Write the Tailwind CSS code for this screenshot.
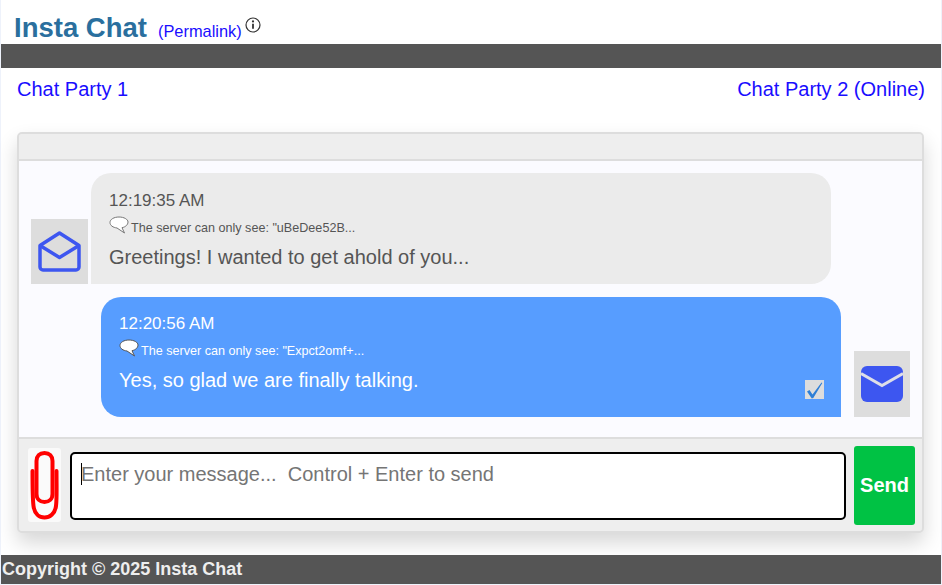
<!DOCTYPE html>
<html lang="en">
<head>
    <meta charset="UTF-8">
    <title>Insta Chat</title>
    <script src="https://cdn.jsdelivr.net/npm/@tailwindcss/browser@4"></script>
</head>
<body class="bg-[#eef2fb] font-['Liberation_Sans',Arial,sans-serif] overflow-hidden">
<div class="ml-px mr-px h-[584px] bg-white flex flex-col">
    <header class="h-[44px] flex items-start pl-[13px] pt-[12px]">
        <h1 class="text-[27.5px] leading-[32px] font-bold text-[#2a6f9e]">Insta Chat</h1>
        <a class="ml-[11px] mt-[9px] text-[16.4px] leading-[20px] text-[#1a0dff]">(Permalink)</a>
        <svg class="ml-[3px] mt-[5px]" width="16" height="16" viewBox="0 0 16 16" fill="none">
            <circle cx="8" cy="8" r="7" stroke="#333" stroke-width="1.2"/>
            <path d="M8 6.800v5" stroke="#333" stroke-width="1.800"/>
            <circle cx="8" cy="4.400" r="1.100" fill="#333"/>
        </svg>
    </header>
    <div class="h-[24px] bg-[#555]"></div>
    <div class="h-[64px] flex justify-between pl-[16px] pr-[16px] pt-[9px] text-[20px] leading-[24px] text-[#1a0dff]">
        <a>Chat Party 1</a>
        <a>Chat Party 2 (Online)</a>
    </div>
    <section class="ml-[16px] mr-[17px] h-[401px] flex flex-col border-2 border-[#ddd] rounded-[5px] shadow-[0_10px_20px_rgba(0,0,0,0.16)] bg-[#eee]">
        <div class="h-[27px] bg-[#eee] border-b-2 border-[#ddd] rounded-t-[4px]"></div>
        <div class="h-[278px] bg-[#fbfbff] flex flex-col gap-[13px] pt-[12px] border-b-2 border-[#ddd]">
            <div class="flex items-end pl-[12px]">
                <div class="w-[57px] h-[65px] bg-[#ddd] flex items-center justify-center">
                    <svg width="43" height="41" viewBox="0 0 43 41" fill="none" stroke="#3d56f0" stroke-width="3.500" stroke-linejoin="round">
                        <path d="M2 14.500 21.500 2 41 14.500V36a3 3 0 0 1-3 3H5a3 3 0 0 1-3-3z"/>
                        <path d="M2 14.500 21.500 26.500 41 14.500"/>
                    </svg>
                </div>
                <div class="ml-[3px] w-[740px] h-[111px] bg-[#ebebeb] rounded-tl-[20px] rounded-tr-[20px] rounded-br-[20px] pl-[18px] pt-[18px] text-[#555]">
                    <div class="text-[17px] leading-[20px]">12:19:35 AM</div>
                    <div class="flex items-end mt-[5px] h-[20px] text-[12.600px] leading-[15px]">
                        <svg class="mr-[2px] mb-[2px]" width="20" height="18" viewBox="0 0 20 18">
                            <path d="M10 1C5 1 1 3.300 1 6.500c0 3 3 5 7 5.500l7.500 5-2.500-5.300c3.500-.7 6-3 6-5.700C19 3.300 15 1 10 1z" fill="#fff" stroke="#777" stroke-width="1"/>
                        </svg>
                        <span>The server can only see: "uBeDee52B...</span>
                    </div>
                    <div class="mt-[9px] text-[20px] leading-[24px]">Greetings! I wanted to get ahold of you...</div>
                </div>
            </div>
            <div class="flex items-end pl-[82px]">
                <div class="relative w-[740px] h-[120px] bg-[#579dff] rounded-tl-[20px] rounded-tr-[20px] rounded-bl-[20px] pl-[18px] pt-[17px] text-white">
                    <div class="text-[17px] leading-[20px]">12:20:56 AM</div>
                    <div class="flex items-end mt-[5px] h-[20px] text-[12.600px] leading-[15px]">
                        <svg class="mr-[2px] mb-[2px]" width="20" height="18" viewBox="0 0 20 18">
                            <path d="M10 1C5 1 1 3.300 1 6.500c0 3 3 5 7 5.500l7.500 5-2.500-5.300c3.500-.7 6-3 6-5.700C19 3.300 15 1 10 1z" fill="#fff" stroke="#555" stroke-width="1"/>
                        </svg>
                        <span>The server can only see: "Expct2omf+...</span>
                    </div>
                    <div class="mt-[9px] text-[20px] leading-[24px]">Yes, so glad we are finally talking.</div>
                    <div class="absolute left-[704px] top-[83px] w-[19px] h-[19px] bg-[#ddd]">
                        <svg width="19" height="19" viewBox="0 0 19 19">
                            <path d="M2 11.500 4.500 10 7.500 14.500 16.500 2.500 17.300 3 8.300 18 6.800 18.500z" fill="#2f7fd6"/>
                        </svg>
                    </div>
                </div>
                <div class="ml-[13px] w-[56px] h-[66px] bg-[#ddd] flex items-center justify-center">
                    <svg width="42" height="36" viewBox="0 0 42 36">
                        <rect width="42" height="36" rx="6" fill="#3d56f0"/>
                        <path d="M0 7.500 21 19.500 42 7.500" fill="none" stroke="#dedee8" stroke-width="3"/>
                    </svg>
                </div>
            </div>
        </div>
        <div class="flex-1 flex items-start pl-[9px] pt-[7px] bg-[#eee] rounded-b-[4px]">
            <div class="w-[33px] h-[74px] mt-[2px] bg-[#fafafa] rounded-[3px]">
                <svg width="33" height="74" viewBox="0 0 33 74" fill="none" stroke="#f00" stroke-width="4" stroke-linecap="round">
                    <path d="M8.500 46V13C8.500 8 11.500 5 16.500 5C21.500 5 24.500 8 24.500 13V46C24.500 51 21 54 16.500 54C12 54 8.500 51 8.500 46z"/>
                    <path d="M4.500 23C4.500 40 4.500 50 5.500 58C6.500 66 11.500 69.500 16.500 69.500C21.500 69.500 27 66 28 58C29 50 28.500 40 28.500 23"/>
                </svg>
            </div>
            <div class="ml-[9px] mt-[6px] w-[776px] h-[68px] bg-white border-2 border-black rounded-[5px] pl-[9px] pt-[8px] text-[20px] leading-[24px] text-[#757575] relative">
                <span class="absolute left-[9px] top-[9px] w-px h-[22px] bg-black"></span>Enter your message...&nbsp; Control + Enter to send
            </div>
            <button class="ml-[8px] w-[61px] h-[79px] pb-[2px] bg-[#00c244] rounded-[3px] text-white font-bold text-[20px]">Send</button>
        </div>
    </section>
    <div class="flex-1"></div>
    <footer class="h-[29px] bg-[#555] text-[#eee] font-bold text-[18px] leading-[28px] pl-px">Copyright © 2025 Insta Chat</footer>
</div>
</body>
</html>
